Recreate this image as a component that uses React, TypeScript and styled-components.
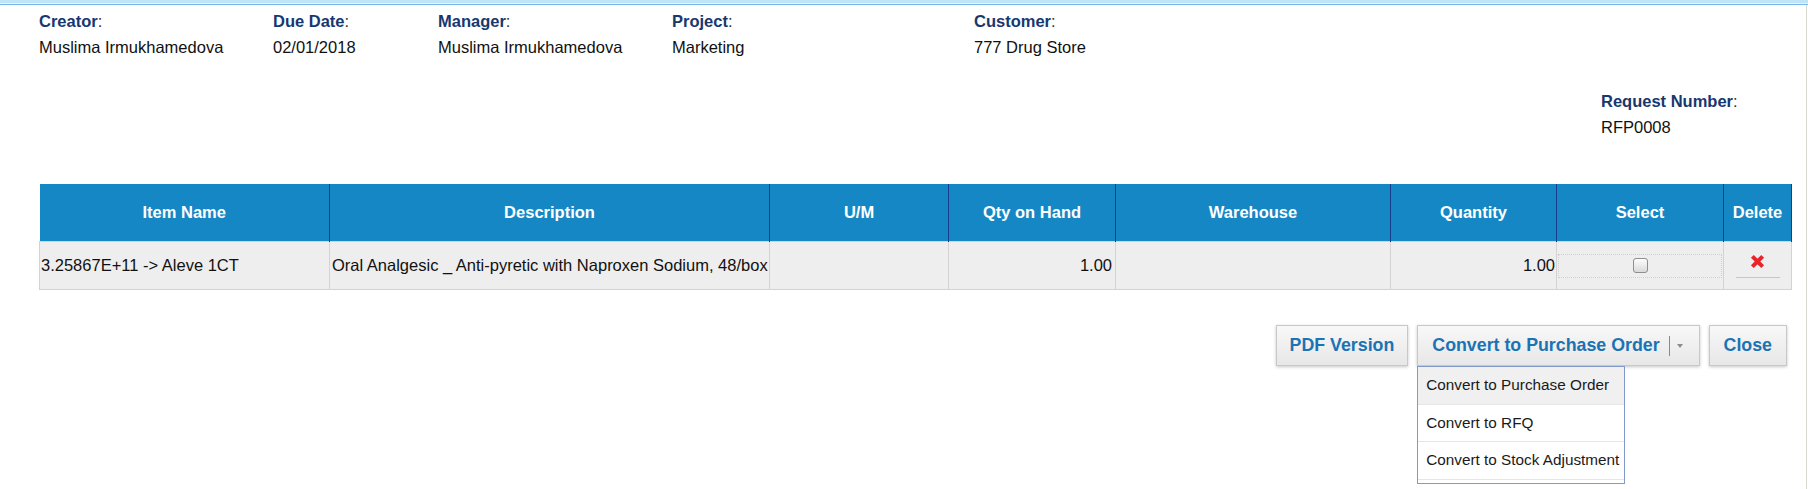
import React from "react";
import styled, { createGlobalStyle } from "styled-components";

const Global = createGlobalStyle`
  html, body { margin: 0; padding: 0; background: #fff; }
  body {
    font-family: "Liberation Sans", Arial, Helvetica, sans-serif;
    font-size: 16.5px;
    color: #111;
  }
`;

const Page = styled.div`
  width: 1808px;
  height: 489px;
  overflow: hidden;
  display: flex;
  flex-direction: column;
`;

const TopBar = styled.div`
  height: 5px;
  flex: none;
  background: linear-gradient(#bfe4f8 0 3px, #e8f4fc 3px 4px, #74b8ee 4px 5px);
`;

const Content = styled.div`
  flex: 1;
  width: 1807px;
  box-sizing: border-box;
  border-right: 1px solid #d9d9cf;
  padding: 3px 0 0 39px;
`;

const InfoGrid = styled.div`
  display: grid;
  grid-template-columns: 234px 165px 234px 302px auto;
  line-height: 26px;
`;

const Field = styled.div`
  display: flex;
  flex-direction: column;
  white-space: nowrap;
`;

const Label = styled.div`
  color: #333;
  b {
    color: #17386f;
    font-weight: bold;
  }
`;

const Value = styled.div`
  color: #111;
`;

const RequestField = styled(Field)`
  margin-top: 28px;
  margin-left: 1562px;
  line-height: 26px;
`;

const Table = styled.table`
  margin-top: 44px;
  width: 1752px;
  border-collapse: collapse;
  table-layout: fixed;
`;

const Th = styled.th`
  background: #1587c5;
  color: #fff;
  font-weight: bold;
  font-size: 16.5px;
  height: 57px;
  padding: 0;
  text-align: center;
  border: none;
  border-right: 1px solid #173d8c;
  white-space: nowrap;
`;

const Td = styled.td<{ $align?: string; $pr?: number; $pl?: number }>`
  background: #eeeeee;
  border: 1px solid #d3d3d3;
  height: 47px;
  padding: 0 ${(p) => p.$pr ?? 0}px 0 ${(p) => p.$pl ?? 0}px;
  text-align: ${(p) => p.$align ?? "left"};
  vertical-align: middle;
  white-space: nowrap;
  overflow: visible;
  color: #111;
`;

const SelectBox = styled.div`
  height: 22px;
  border: 1px dotted #cfcfcf;
  display: flex;
  align-items: center;
  justify-content: center;
`;

const Check = styled.span`
  width: 13px;
  height: 13px;
  border: 1px solid #8e8e8e;
  border-radius: 3px;
  background: linear-gradient(#fdfdfd, #d9d9d9);
  box-sizing: content-box;
`;

const DeleteLink = styled.span`
  display: flex;
  justify-content: center;
  width: 44px;
  margin: 0 auto;
  padding-bottom: 8px;
  border-bottom: 1px solid #c6c6c6;
`;

const Actions = styled.div`
  width: 1752px;
  margin-top: 35px;
  box-sizing: border-box;
  padding-right: 4px;
  display: flex;
  justify-content: flex-end;
  gap: 9px;
`;

const Button = styled.div<{ $px?: number }>`
  height: 41px;
  box-sizing: border-box;
  padding: 0 ${(p) => p.$px ?? 14}px;
  display: flex;
  align-items: center;
  font-weight: bold;
  font-size: 17.8px;
  color: #1b73b4;
  background: linear-gradient(#f8f8f8, #e7e7e7);
  border: 1px solid #c8c8c8;
  box-shadow: 0 1px 3px rgba(0, 0, 0, 0.22);
  white-space: nowrap;
`;

const SplitWrap = styled.div`
  position: relative;
`;

const Divider = styled.span`
  width: 1px;
  height: 20px;
  background: #8a8a8a;
  margin-left: 9px;
`;

const Caret = styled.span`
  margin-left: 7px;
  margin-right: 2px;
  width: 0;
  height: 0;
  border-left: 3.5px solid transparent;
  border-right: 3.5px solid transparent;
  border-top: 4px solid #8c8c8c;
`;

const Menu = styled.div`
  position: absolute;
  top: 100%;
  left: 0;
  width: 208px;
  box-sizing: border-box;
  background: #fff;
  border: 1px solid #7f9acb;
  padding-bottom: 3px;
  z-index: 2;
`;

const MenuItem = styled.div<{ $active?: boolean }>`
  height: 37.5px;
  box-sizing: border-box;
  display: flex;
  align-items: center;
  padding-left: 8px;
  font-size: 15.3px;
  color: #1a1a1a;
  background: ${(p) => (p.$active ? "#f0f0f0" : "#fff")};
  border-bottom: 1px solid #e6e6e6;
  white-space: nowrap;
`;

const RedX = () => (
  <svg width="15" height="15" viewBox="0 0 14 14">
    <path d="M2.2 2.2 L11.8 11.8 M11.8 2.2 L2.2 11.8" stroke="#e5262c" strokeWidth="3.8" strokeLinecap="butt" />
  </svg>
);

const fields = [
  ["Creator", "Muslima Irmukhamedova"],
  ["Due Date", "02/01/2018"],
  ["Manager", "Muslima Irmukhamedova"],
  ["Project", "Marketing"],
  ["Customer", "777 Drug Store"],
];

const columns: [string, number][] = [
  ["Item Name", 290],
  ["Description", 440],
  ["U/M", 179],
  ["Qty on Hand", 167],
  ["Warehouse", 275],
  ["Quantity", 166],
  ["Select", 167],
  ["Delete", 68],
];

export default function App() {
  return (
    <Page>
      <Global />
      <TopBar />
      <Content>
        <InfoGrid>
          {fields.map(([l, v]) => (
            <Field key={l}>
              <Label>
                <b>{l}</b>:
              </Label>
              <Value>{v}</Value>
            </Field>
          ))}
        </InfoGrid>
        <RequestField>
          <Label>
            <b>Request Number</b>:
          </Label>
          <Value>RFP0008</Value>
        </RequestField>
        <Table>
          <colgroup>
            {columns.map(([n, w]) => (
              <col key={n} style={{ width: w }} />
            ))}
          </colgroup>
          <thead>
            <tr>
              {columns.map(([n]) => (
                <Th key={n}>{n}</Th>
              ))}
            </tr>
          </thead>
          <tbody>
            <tr>
              <Td $pl={1}>3.25867E+11 -&gt; Aleve 1CT</Td>
              <Td $pl={2}>Oral Analgesic _ Anti-pyretic with Naproxen Sodium, 48/box</Td>
              <Td />
              <Td $align="right" $pr={3}>1.00</Td>
              <Td />
              <Td $align="right" $pr={1}>1.00</Td>
              <Td $pl={1} $pr={1}>
                <SelectBox>
                  <Check />
                </SelectBox>
              </Td>
              <Td>
                <DeleteLink>
                  <RedX />
                </DeleteLink>
              </Td>
            </tr>
          </tbody>
        </Table>
        <Actions>
          <Button $px={13}>PDF Version</Button>
          <SplitWrap>
            <Button $px={14}>
              Convert to Purchase Order
              <Divider />
              <Caret />
            </Button>
            <Menu>
              <MenuItem $active>Convert to Purchase Order</MenuItem>
              <MenuItem>Convert to RFQ</MenuItem>
              <MenuItem>Convert to Stock Adjustment</MenuItem>
            </Menu>
          </SplitWrap>
          <Button $px={14}>Close</Button>
        </Actions>
      </Content>
    </Page>
  );
}
